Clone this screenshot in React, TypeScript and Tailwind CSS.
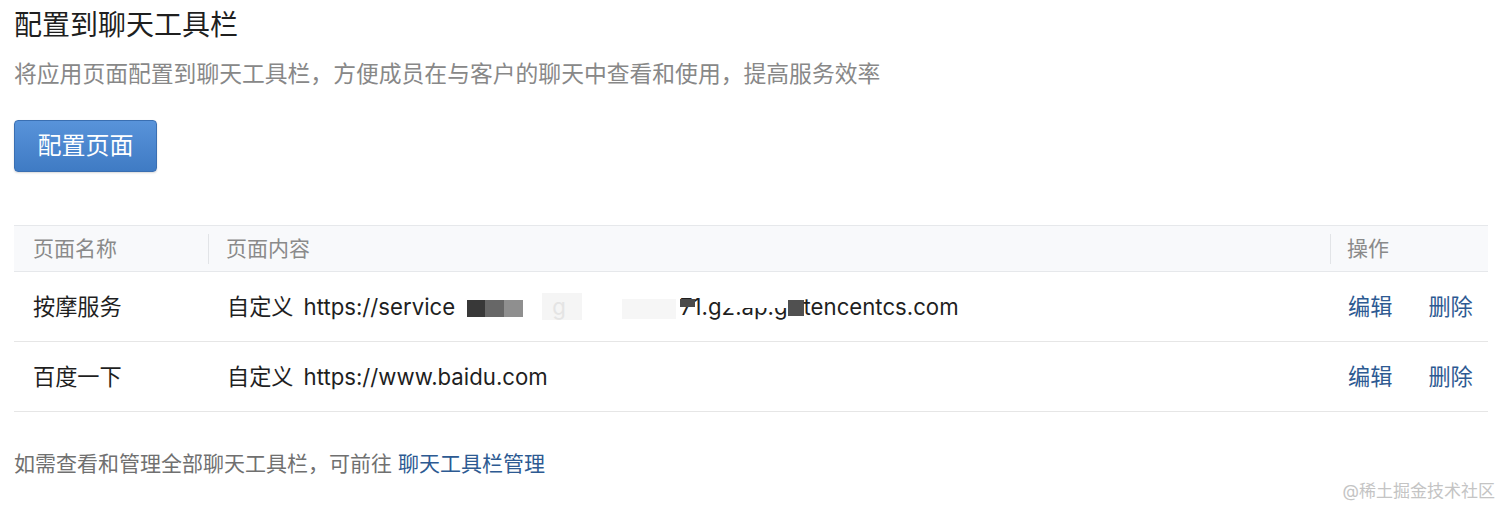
import React from "react";

const FONT = { fontFamily: 'Inter, "Noto Sans CJK SC", sans-serif' };

function MaskedUrl() {
  return (
    <>
      https://service
      <span className="inline-block w-[12px]" />
      <span className="inline-block w-[18px] h-[17px] bg-[#383838] align-[-2px]" />
      <span className="inline-block w-[19px] h-[17px] bg-[#676767] align-[-2px]" />
      <span className="inline-block w-[19px] h-[17px] bg-[#8f8f8f] align-[-2px]" />
      <span className="inline-block w-[19px]" />
      <span className="bg-[#f5f5f5] text-[#e4e4e4] px-[10px]">g&nbsp;</span>
      <span className="inline-block w-[40px]" />
      <span className="inline-block w-[54px] h-[20px] bg-[#f6f6f6] align-[-4px]" />
      <span className="inline-block w-[4px]" />
      <span className="relative">
        71.g
        <span className="absolute left-0 top-[6px] w-[15px] h-[8px] bg-[#4a4a4a]" />
      </span>
      <span className="inline-block [clip-path:inset(55%_0_0_0)]">2.ap.g</span>
      <span className="inline-block w-[16px] h-[16px] bg-[#505050] align-[-1px]" />
      tencentcs.com
    </>
  );
}

export default function App() {
  return (
    <div className="relative min-h-[517px] w-[1512px] bg-white overflow-hidden" style={FONT}>
      <div className="pl-[14px] pt-[7px] w-[1488px]">
        <h1 className="text-[28px] leading-[36px] text-[#1f1f1f] font-normal">配置到聊天工具栏</h1>
        <p className="mt-[16px] text-[22.8px] leading-[30px] text-[#888888]">
          将应用页面配置到聊天工具栏，方便成员在与客户的聊天中查看和使用，提高服务效率
        </p>
        <button className="mt-[31px] flex h-[52px] w-[143px] items-center justify-center rounded-[4px] border border-[#3a6fb2] bg-gradient-to-b from-[#5893da] to-[#3f7bc4] text-[24px] text-white shadow-[0_1px_2px_rgba(0,0,0,0.15)]">
          配置页面
        </button>

        <div className="mt-[53px] w-[1474px]">
          <div className="grid h-[47px] grid-cols-[194px_1fr_158px] border-y border-[#e6e8eb] bg-[#f8f9fb] text-[21px] text-[#8a8a8a]">
            <div className="flex items-center pl-[19px]">页面名称</div>
            <div className="flex items-center">
              <div className="h-[30px] w-px bg-[#e2e4e7]" />
              <span className="ml-[17px]">页面内容</span>
            </div>
            <div className="flex items-center">
              <div className="h-[30px] w-px bg-[#e2e4e7]" />
              <span className="ml-[16px]">操作</span>
            </div>
          </div>

          {[
            { name: "按摩服务", url: <MaskedUrl /> },
            { name: "百度一下", url: <>https://www.baidu.com</> },
          ].map((r, i) => (
            <div
              key={i}
              className="grid h-[70px] grid-cols-[194px_1fr_158px] border-b border-[#e6e6e6] text-[22.2px] text-[#1f1f1f]"
            >
              <div className="flex items-center pl-[19px]">{r.name}</div>
              <div className="flex items-center pl-[19px]">
                <span className="whitespace-nowrap leading-[30px]">
                  自定义<span className="inline-block w-[10px]" />
                  {r.url}
                </span>
              </div>
              <div className="flex items-center gap-[36px] pl-[18px] text-[#2d5a92]">
                <span className="cursor-pointer">编辑</span>
                <span className="cursor-pointer">删除</span>
              </div>
            </div>
          ))}
        </div>

        <p className="mt-[37px] text-[21px] leading-[30px] text-[#707070]">
          如需查看和管理全部聊天工具栏，可前往 <span className="text-[#2d5a92]">聊天工具栏管理</span>
        </p>
      </div>

      <div className="absolute right-[17px] top-[478px] text-[17px] leading-[26px] text-[#c4c4c4]">
        @稀土掘金技术社区
      </div>
    </div>
  );
}
